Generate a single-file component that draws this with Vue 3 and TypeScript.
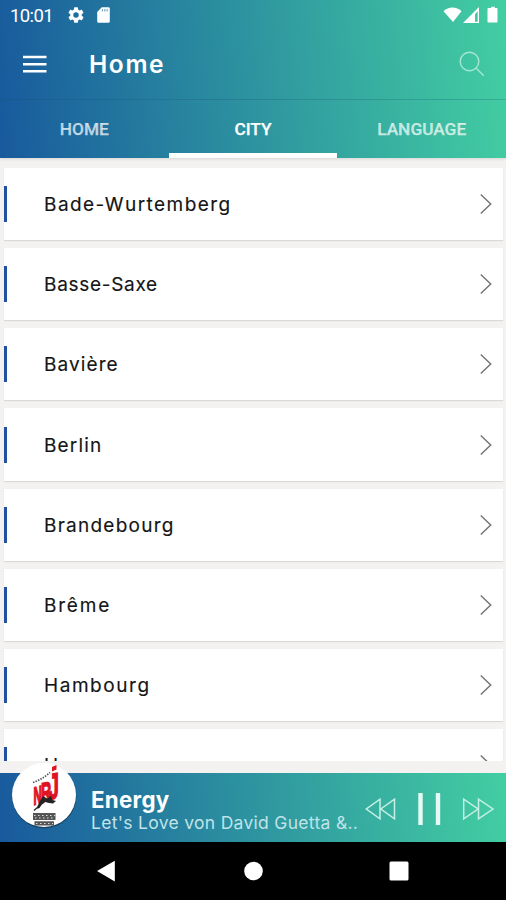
<script setup lang="ts">
interface City {
  name: string
  tracking: number
}

const tabs: string[] = ['HOME', 'CITY', 'LANGUAGE']
const activeTab = 'CITY'

const cities: City[] = [
  { name: 'Bade-Wurtemberg', tracking: 1.45 },
  { name: 'Basse-Saxe', tracking: 0.7 },
  { name: 'Bavière', tracking: 1.1 },
  { name: 'Berlin', tracking: 1.15 },
  { name: 'Brandebourg', tracking: 1.25 },
  { name: 'Brême', tracking: 1.8 },
  { name: 'Hambourg', tracking: 1.55 },
  { name: 'Hesse', tracking: 1.1 },
]
</script>

<template>
  <div class="screen">
    <header class="header">
      <div class="status">
        <span class="clock">10:01</span>
        <svg class="gear" width="16" height="16" viewBox="2 2 20 20">
          <path fill="#fff" d="M19.14 12.94c.04-.3.06-.61.06-.94s-.02-.64-.07-.94l2.03-1.58a.49.49 0 0 0 .12-.61l-1.92-3.32a.49.49 0 0 0-.59-.22l-2.39.96a7 7 0 0 0-1.62-.94l-.36-2.54a.48.48 0 0 0-.48-.41h-3.84a.47.47 0 0 0-.47.41l-.36 2.54c-.59.24-1.13.57-1.62.94l-2.39-.96a.48.48 0 0 0-.59.22L2.74 8.87a.48.48 0 0 0 .12.61l2.03 1.58a7.5 7.5 0 0 0 0 1.88l-2.03 1.58a.49.49 0 0 0-.12.61l1.92 3.32c.12.22.37.29.59.22l2.39-.96c.5.38 1.03.7 1.62.94l.36 2.54c.05.24.24.41.48.41h3.84c.24 0 .44-.17.47-.41l.36-2.54c.59-.24 1.13-.56 1.62-.94l2.39.96c.22.08.47 0 .59-.22l1.92-3.32a.47.47 0 0 0-.12-.61zM12 15.4a3.4 3.4 0 1 1 0-6.8 3.4 3.4 0 0 1 0 6.8z" />
        </svg>
        <svg class="sd" width="13" height="16" viewBox="0 0 13 16">
          <path fill="#fff" d="M4.8.3h6.7A1.3 1.3 0 0 1 12.800 1.600V14.200a1.500 1.500 0 0 1-1.500 1.500H1.600A1.400 1.400 0 0 1 .2 14.200V5z" />
          <path stroke="#6fa5c0" stroke-width="1.100" d="M5.500 2v2.400M7.800 2v2.400M10.100 2v2.400" />
        </svg>
        <span class="spacer"></span>
        <svg width="57" height="18" viewBox="0 0 57 18">
          <path fill="#fff" d="M.5 5.200C5.500.4 13.500.4 18.500 5.200L10 16z" />
          <path fill="#fff" fill-rule="evenodd" d="M36 1v16H20zM34.700 5.300l-2.700 3v7.400h2.700z" />
          <path fill="#fff" d="M46.500 2h1.700V.8h3.600V2h1.700c.6 0 1 .4 1 1v12.600c0 .6-.4 1-1 1h-8c-.6 0-1-.4-1-1V3c0-.6.4-1 1-1z" />
        </svg>
      </div>
      <div class="appbar">
        <svg class="menu" width="24" height="18" viewBox="0 0 24 18">
          <path stroke="#fff" stroke-width="2.600" d="M0 2h23.500M0 9.200h23.500M0 16.300h23.500" />
        </svg>
        <h1 class="title">Home</h1>
        <span class="spacer"></span>
        <svg width="26" height="26" viewBox="0 0 26 26" fill="none" stroke="#a5e6d2" stroke-width="1.400">
          <circle cx="10.500" cy="10.500" r="9.300" />
          <path d="M17.200 17.200l7.600 7.600" />
        </svg>
      </div>
      <nav class="tabs">
        <div v-for="tab in tabs" :key="tab" class="tab" :class="{ active: tab === activeTab }">{{ tab }}</div>
      </nav>
    </header>

    <main class="list">
      <div v-for="city in cities" :key="city.name" class="card">
        <span class="accent"></span>
        <span class="name" :style="{ letterSpacing: city.tracking + 'px' }">{{ city.name }}</span>
        <svg class="chevron" width="12" height="22" viewBox="0 0 12 22">
          <path fill="none" stroke="#777" stroke-width="1.500" d="M.8 1.500L10.700 11 .8 20.500" />
        </svg>
      </div>
    </main>

    <section class="player">
      <svg class="logo" width="68" height="70" viewBox="0 0 68 70">
        <circle cx="34.200" cy="35.300" r="32.200" fill="#173b57" opacity=".8" />
        <circle cx="34" cy="34" r="32" fill="#fff" />
        <path fill="none" stroke="#555" stroke-width="1.700" stroke-dasharray="1.500 1.200" d="M23 21.500Q32 18.500 40 11.500" />
        <g class="brand">
          <text transform="translate(23.500 44) skewY(-14) scale(.46 1)" font-size="25">N</text>
          <text transform="translate(31 42) skewY(-12) scale(.5 1)" font-size="28">R</text>
          <text transform="translate(38.500 38.500) skewY(-10) scale(.52 1)" font-size="36">J</text>
        </g>
        <path fill="#df1423" d="M42 6l4.500-2v4.500L42 10.500z" />
        <path fill="#242424" d="M27 46l3-6 3-5 4 2.500 4-2.500 1.500 4 3.500 1-3 2.500-4-.5-4-1-3.500 3-2 3-3 1-2 2-1-1z" />
        <path fill="#555" d="M23 52h22.500v7H23zM24.500 60.300h19.500v4.200H24.500z" />
        <path fill="none" stroke="#ddd" stroke-width="1" stroke-dasharray="1.500 2.500" d="M24 54.500h21M25 57h20M26 62.500h17" />
      </svg>
      <div class="track">
        <div class="station">Energy</div>
        <div class="song">Let's Love von David Guetta &amp;..</div>
      </div>
      <svg class="controls" width="130" height="36" viewBox="0 0 130 36" fill="none" stroke="#c4f0e5" stroke-width="1.500">
        <path d="M15 8.200v19.600L1.300 18zM29.500 8.200v19.600L15.800 18z" />
        <path stroke="#e6faf5" stroke-width="4.400" d="M55.500 2v32M73 2v32" />
        <path d="M98.700 8.200v19.600L113 18zM113.500 8.200v19.600L128 18z" />
      </svg>
    </section>

    <footer class="navbar">
      <svg width="506" height="58" viewBox="0 0 506 58" fill="#fff">
        <path d="M97 29l17.800-10.300v20.800z" />
        <circle cx="253.500" cy="29" r="9.300" />
        <rect x="389.500" y="19.500" width="19" height="19" rx="1.500" />
      </svg>
    </footer>
  </div>
</template>

<style>
body {
  margin: 0;
  background: #f3f2f0;
}
</style>

<style scoped>
.screen {
  width: 506px;
  height: 900px;
  display: flex;
  flex-direction: column;
  overflow: hidden;
  background: #f3f2f1;
  font-family: Inter, "Liberation Sans", sans-serif;
}
.header {
  height: 158px;
  flex: none;
  display: flex;
  flex-direction: column;
  background: linear-gradient(85deg, #185a9d, #43cea2);
  box-shadow: 0 1px 3px rgba(0, 0, 0, 0.12);
  color: #fff;
}
.status {
  height: 32px;
  display: flex;
  align-items: center;
  padding: 0 6px 0 10px;
  box-sizing: border-box;
}
.status > svg {
  position: relative;
  top: -1px;
}
.clock {
  width: 58px;
  font: 18.5px Roboto, sans-serif;
  letter-spacing: -0.6px;
}
.gear {
  margin-right: 13px;
}
.spacer {
  flex: 1;
}
.appbar {
  height: 67px;
  display: flex;
  align-items: center;
  padding: 0 21px 3px 23px;
  box-sizing: border-box;
}
.menu {
  margin-right: 42px;
}
.title {
  margin: 0;
  font-size: 24.5px;
  font-weight: 600;
  letter-spacing: 1.6px;
  line-height: 30px;
}
.tabs {
  height: 59px;
  display: grid;
  grid-template-columns: repeat(3, 1fr);
  border-top: 1px solid rgba(20, 80, 110, 0.25);
  box-sizing: border-box;
}
.tab {
  display: flex;
  align-items: center;
  justify-content: center;
  font: 500 17.3px Roboto, sans-serif;
  color: rgba(255, 255, 255, 0.7);
  -webkit-text-stroke: 0.25px currentColor;
  border-bottom: 5px solid transparent;
  padding-top: 4px;
}
.tab.active {
  color: #fff;
  border-bottom-color: #fff;
}
.list {
  height: 603px;
  flex: none;
  box-sizing: border-box;
  padding: 10px 3px 0 4px;
  display: flex;
  flex-direction: column;
  gap: 8px;
  overflow: hidden;
}
.card {
  height: 72.17px;
  flex: none;
  display: flex;
  align-items: center;
  padding-right: 11px;
  background: #fff;
  box-shadow: 0 1px 1px rgba(0, 0, 0, 0.1);
}
.accent {
  width: 3px;
  height: 36px;
  margin-right: 37px;
  background: #2450a0;
}
.name {
  flex: 1;
  padding-top: 2px;
  font-size: 19px;
  line-height: 24px;
  color: #151515;
  -webkit-text-stroke: 0.15px #151515;
}
.player {
  height: 69px;
  margin-top: 12px;
  flex: none;
  display: flex;
  align-items: center;
  padding: 0 9px 0 11px;
  box-sizing: border-box;
  background: linear-gradient(85deg, #185a9d, #43cea2);
}
.logo {
  flex: none;
  margin: -24px 13px 0 -1px;
}
.brand {
  fill: #df1423;
  font-family: "Liberation Sans", sans-serif;
  font-weight: 700;
  stroke: #df1423;
  stroke-width: 1.6px;
}
.track {
  width: 274px;
  flex: none;
  padding-top: 6px;
}
.station {
  color: #fff;
  font-size: 22.3px;
  font-weight: 650;
  letter-spacing: 0.3px;
  line-height: 24px;
}
.song {
  font-size: 17.5px;
  line-height: 22px;
  letter-spacing: 0.3px;
  color: #bfe3e9;
  white-space: nowrap;
}
.controls {
  flex: none;
  margin: 3px 0 0 0;
}
.navbar {
  height: 58px;
  flex: none;
  background: #000;
}
</style>
